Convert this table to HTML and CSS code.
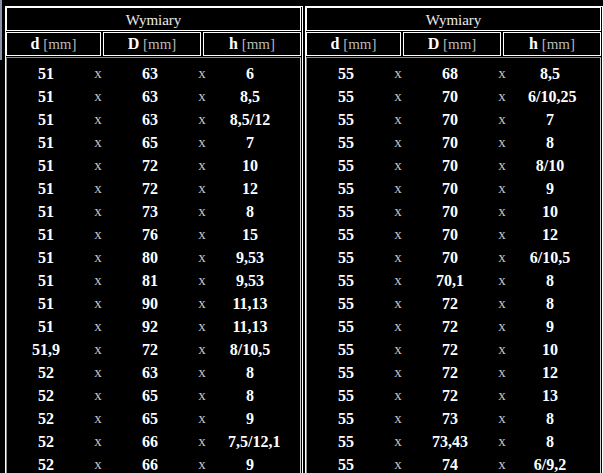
FILE: index.html
```html
<!DOCTYPE html>
<html lang="pl">
<head>
<meta charset="utf-8">
<title>Wymiary</title>
<link rel="stylesheet" href="styles.css">
</head>
<body>
<div class="page">
  <div class="edge"></div>
  <section class="panel panel-left">
    <div class="title">Wymiary</div>
    <div class="heads">
      <div class="head"><b>d</b> [mm]</div>
      <div class="head"><b>D</b> [mm]</div>
      <div class="head"><b>h</b> [mm]</div>
    </div>
    <div class="data">
      <div class="row"><span>51</span><i>x</i><span>63</span><i>x</i><span>6</span></div>
      <div class="row"><span>51</span><i>x</i><span>63</span><i>x</i><span>8,5</span></div>
      <div class="row"><span>51</span><i>x</i><span>63</span><i>x</i><span>8,5/12</span></div>
      <div class="row"><span>51</span><i>x</i><span>65</span><i>x</i><span>7</span></div>
      <div class="row"><span>51</span><i>x</i><span>72</span><i>x</i><span>10</span></div>
      <div class="row"><span>51</span><i>x</i><span>72</span><i>x</i><span>12</span></div>
      <div class="row"><span>51</span><i>x</i><span>73</span><i>x</i><span>8</span></div>
      <div class="row"><span>51</span><i>x</i><span>76</span><i>x</i><span>15</span></div>
      <div class="row"><span>51</span><i>x</i><span>80</span><i>x</i><span>9,53</span></div>
      <div class="row"><span>51</span><i>x</i><span>81</span><i>x</i><span>9,53</span></div>
      <div class="row"><span>51</span><i>x</i><span>90</span><i>x</i><span>11,13</span></div>
      <div class="row"><span>51</span><i>x</i><span>92</span><i>x</i><span>11,13</span></div>
      <div class="row"><span>51,9</span><i>x</i><span>72</span><i>x</i><span>8/10,5</span></div>
      <div class="row"><span>52</span><i>x</i><span>63</span><i>x</i><span>8</span></div>
      <div class="row"><span>52</span><i>x</i><span>65</span><i>x</i><span>8</span></div>
      <div class="row"><span>52</span><i>x</i><span>65</span><i>x</i><span>9</span></div>
      <div class="row"><span>52</span><i>x</i><span>66</span><i>x</i><span>7,5/12,1</span></div>
      <div class="row"><span>52</span><i>x</i><span>66</span><i>x</i><span>9</span></div>
    </div>
  </section>
  <section class="panel panel-right">
    <div class="title">Wymiary</div>
    <div class="heads">
      <div class="head"><b>d</b> [mm]</div>
      <div class="head"><b>D</b> [mm]</div>
      <div class="head"><b>h</b> [mm]</div>
    </div>
    <div class="data">
      <div class="row"><span>55</span><i>x</i><span>68</span><i>x</i><span>8,5</span></div>
      <div class="row"><span>55</span><i>x</i><span>70</span><i>x</i><span>6/10,25</span></div>
      <div class="row"><span>55</span><i>x</i><span>70</span><i>x</i><span>7</span></div>
      <div class="row"><span>55</span><i>x</i><span>70</span><i>x</i><span>8</span></div>
      <div class="row"><span>55</span><i>x</i><span>70</span><i>x</i><span>8/10</span></div>
      <div class="row"><span>55</span><i>x</i><span>70</span><i>x</i><span>9</span></div>
      <div class="row"><span>55</span><i>x</i><span>70</span><i>x</i><span>10</span></div>
      <div class="row"><span>55</span><i>x</i><span>70</span><i>x</i><span>12</span></div>
      <div class="row"><span>55</span><i>x</i><span>70</span><i>x</i><span>6/10,5</span></div>
      <div class="row"><span>55</span><i>x</i><span>70,1</span><i>x</i><span>8</span></div>
      <div class="row"><span>55</span><i>x</i><span>72</span><i>x</i><span>8</span></div>
      <div class="row"><span>55</span><i>x</i><span>72</span><i>x</i><span>9</span></div>
      <div class="row"><span>55</span><i>x</i><span>72</span><i>x</i><span>10</span></div>
      <div class="row"><span>55</span><i>x</i><span>72</span><i>x</i><span>12</span></div>
      <div class="row"><span>55</span><i>x</i><span>72</span><i>x</i><span>13</span></div>
      <div class="row"><span>55</span><i>x</i><span>73</span><i>x</i><span>8</span></div>
      <div class="row"><span>55</span><i>x</i><span>73,43</span><i>x</i><span>8</span></div>
      <div class="row"><span>55</span><i>x</i><span>74</span><i>x</i><span>6/9,2</span></div>
    </div>
  </section>
</div>
</body>
</html>
```
FILE: styles.css
```css
html, body {
  margin: 0;
  padding: 0;
  background: #000;
  height: 473px;
  overflow: hidden;
}

body {
  font-family: "Liberation Serif", "Times New Roman", serif;
  color: #fff;
}

.page {
  display: flex;
  align-items: flex-start;
  height: 473px;
  padding-top: 6px;
  box-sizing: border-box;
}

.edge {
  width: 2px;
  height: 60px;
  margin-top: -6px;
  background: #8a93a8;
  margin-right: 3px;
}

.panel {
  display: flex;
  flex-direction: column;
  gap: 1px;
  width: 296px;
  border-top: 1px solid #fff;
  border-left: 1px solid #fff;
  border-right: 1px solid #fff;
  padding-right: 1px;
  height: 480px;
}

.panel-right {
  margin-left: 2px;
}

.title {
  border: 1px solid #fff;
  height: 22px;
  line-height: 24px;
  text-align: center;
  font-size: 15px;
  color: #ececec;
}

.heads {
  display: grid;
  grid-template-columns: 95px 98px 1fr;
  gap: 2px;
}

.head {
  border: 1px solid #fff;
  height: 22px;
  line-height: 22px;
  text-align: center;
  font-size: 15px;
  color: #b8b8b8;
}

.head b {
  color: #fff;
  font-size: 16px;
}

.data {
  border-top: 1px solid #8c8c8c;
  border-left: 1px solid #8c8c8c;
  border-right: 1px solid #d0d0d0;
  padding-top: 4px;
  flex: 1;
}

.row {
  display: grid;
  grid-template-columns: 52px 52px 52px 52px 44px;
  padding-left: 13px;
  height: 23px;
  line-height: 23px;
  text-align: center;
}

.row span {
  font-weight: bold;
  font-size: 16px;
  color: #fff;
}

.row i {
  font-style: normal;
  font-size: 15px;
  color: #c4c4c4;
}
```
